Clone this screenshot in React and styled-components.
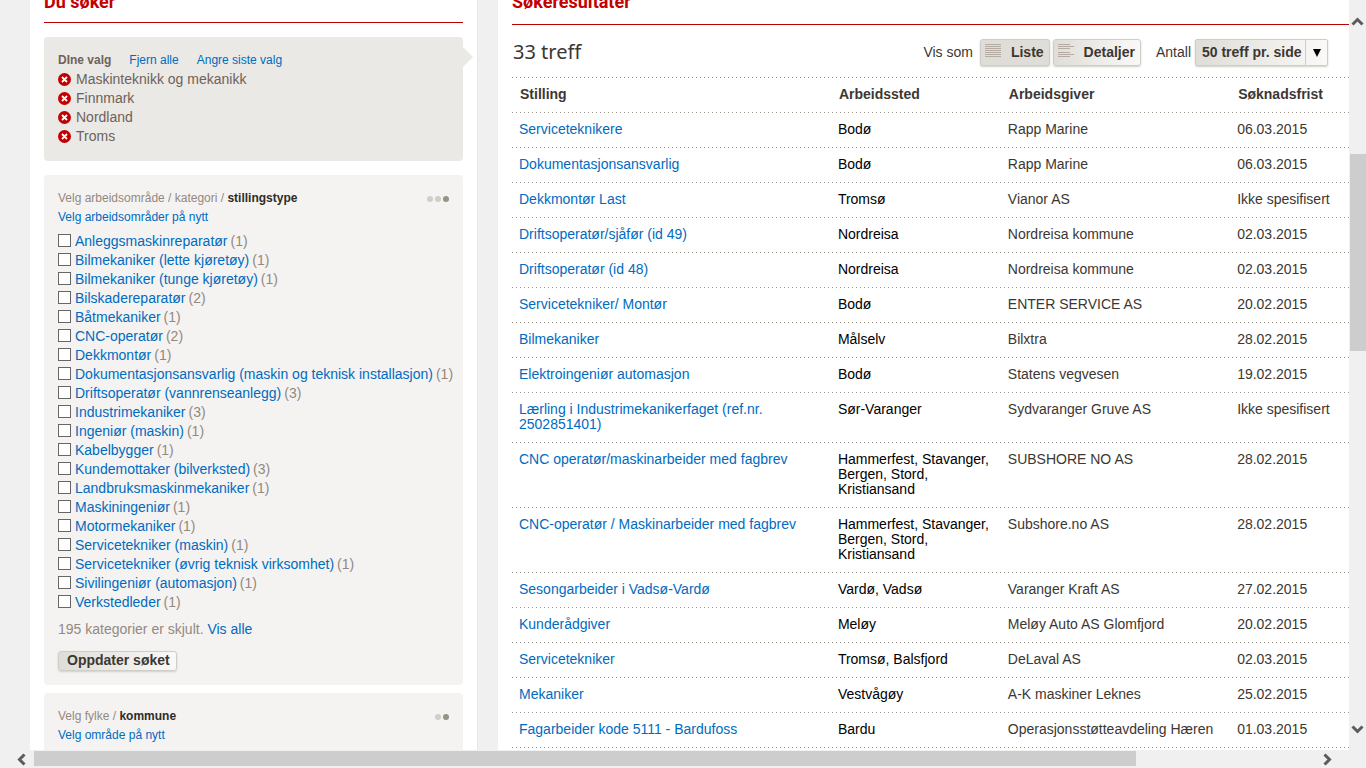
import React from "react";
import styled, { createGlobalStyle } from "styled-components";

const GlobalStyle = createGlobalStyle`
  *, *::before, *::after { box-sizing: border-box; }
  html, body { margin: 0; padding: 0; }
  body {
    background: #f0f0f0;
    color: #3c3732;
    font-family: "Liberation Sans", Arial, Helvetica, sans-serif;
    font-size: 14px;
    line-height: 15px;
  }
`;

const Window = styled.div`
  display: grid;
  grid-template-columns: minmax(0, 1fr) 17px;
  grid-template-rows: minmax(0, 1fr) 18px;
  height: 100vh;
  overflow: hidden;
`;

const Page = styled.div`
  display: grid;
  grid-template-columns: 448px minmax(0, 1fr);
  column-gap: 20px;
  padding-left: 30px;
  overflow: hidden;
`;

const Sidebar = styled.aside`
  padding: 0 14px;
  background: #fff;
  border-right: 1px solid #e8e8e8;
`;

const Results = styled.main`
  padding-left: 14px;
  background: #fff;
`;

const SectionTitle = styled.h2`
  height: ${(p) => p.$height}px;
  margin: -8px 0 0;
  border-bottom: 1px solid #c00000;
  color: #c30000;
  font: bold 18px/20px Roboto, "Liberation Sans", sans-serif;
`;

const Link = styled.a`
  color: #006bbf;
  text-decoration: none;
  &:hover { text-decoration: underline; }
`;

const Panel = styled.section`
  position: relative;
  margin-top: ${(p) => p.$gap}px;
  padding: 14px;
  border-radius: 4px;
  background: ${(p) => (p.$dark ? "#eae9e6" : "#f4f3f2")};
`;

const Pointer = styled.span`
  position: absolute;
  top: 10px;
  left: 100%;
  border: 10px solid transparent;
  border-right-width: 0;
  border-left-color: #eae9e6;
`;

const ChoiceBar = styled.div`
  display: flex;
  gap: 18px;
  color: #6e6259;
  font-size: 12px;
  line-height: 19px;
`;

const PlainList = styled.ul`
  margin: 0;
  padding: ${(p) => (p.$spaced ? "5px 0 0" : "0 0 1px")};
  list-style: none;
`;

const Choice = styled.li`
  display: flex;
  align-items: center;
  gap: 5px;
  height: 19px;
  color: #6e6259;
`;

const RemoveButton = styled.button`
  width: 13px;
  height: 13px;
  padding: 0;
  border: 0;
  background: none;
  svg { display: block; }
`;

const Crumb = styled.header`
  display: flex;
  justify-content: space-between;
  align-items: center;
  color: #93897f;
  font-size: 12px;
  line-height: 19px;
  strong { color: #2f2b27; }
`;

const Dots = styled.span`
  display: flex;
  gap: 2px;
`;

const Dot = styled.i`
  width: 6px;
  height: 6px;
  border-radius: 50%;
  background: ${(p) => (p.$on ? "#999086" : "#d0cec9")};
`;

const Again = styled.div`
  font-size: 12px;
  line-height: 19px;
`;

const Category = styled.li`
  display: flex;
  align-items: center;
  gap: 3px;
  height: 19px;
  color: #93897f;
`;

const CheckLabel = styled.label`
  display: flex;
  align-items: center;
  gap: 4px;
  color: #006bbf;
  white-space: nowrap;
`;

const Check = styled.input`
  appearance: none;
  width: 13px;
  height: 13px;
  margin: 0 0 3px;
  border: 1px solid #666;
  background: #fff;
  &:checked { background: #006bbf; }
`;

const Hidden = styled.p`
  margin: 10px 0 14px;
  color: #93897f;
`;

const Button = styled.button`
  display: flex;
  align-items: center;
  height: ${(p) => (p.$small ? 20 : 27)}px;
  padding: ${(p) => (p.$small ? "0 6px 2px 8px" : "0 5px 1px 4px")};
  gap: 10px;
  border: 1px solid #cfcdc8;
  border-radius: 3px;
  background: ${(p) => (p.$active ? "#deddd7" : "linear-gradient(to right, #deddd7, #faf9f8)")};
  box-shadow: 0 1px 2px #d0cec9;
  color: #3c3732;
  font: bold 14px/15px "Liberation Sans", Arial, sans-serif;
  white-space: nowrap;
`;

const Toolbar = styled.div`
  display: flex;
  align-items: center;
  height: 52px;
  padding: 3px 21px 0 1px;
`;

const HitCount = styled.h3`
  flex: 1;
  margin: 0;
  padding-bottom: 2px;
  font: 20px/24px "Noto Sans", sans-serif;
`;

const ViewGroup = styled.div`
  display: flex;
  align-items: center;
  gap: 3px;
  margin-right: 15px;
  span { margin-right: 4px; }
`;

const CountLabel = styled.label`
  margin-right: 4px;
`;

const SelectWrap = styled.div`
  position: relative;
  display: flex;
`;

const Select = styled.select`
  appearance: none;
  width: 133px;
  height: 27px;
  padding: 0 0 1px 6px;
  border: 1px solid #cfcdc8;
  border-radius: 2px;
  background: linear-gradient(to right, #deddd7, #faf9f8);
  box-shadow: 0 1px 2px #d0cec9;
  color: #3c3732;
  font: bold 14px/15px "Liberation Sans", Arial, sans-serif;
`;

const SelectArrow = styled.span`
  position: absolute;
  top: 1px;
  right: 1px;
  bottom: 1px;
  display: flex;
  align-items: center;
  justify-content: center;
  width: 22px;
  border-left: 1px solid #cfcdc8;
  pointer-events: none;
`;

const dots = "repeating-linear-gradient(to right, #999086 0 1px, transparent 1px 4px)";

const Table = styled.table`
  width: 100%;
  border-collapse: collapse;
  table-layout: fixed;
`;

const Row = styled.tr`
  background: ${dots} left top / 100% 1px no-repeat;
`;

const Head = styled.th`
  width: ${(p) => p.$width};
  padding: 10px 8px;
  text-align: left;
`;

const Cell = styled.td`
  padding: 10px 7px;
  vertical-align: top;
  color: ${(p) => (p.$strong ? "#000" : "#3c3732")};
`;

const Title = styled(Link)`
  display: block;
  max-width: 280px;
`;

const VerticalBar = styled.div`
  display: flex;
  flex-direction: column;
  align-items: center;
  padding: 17px 0 16px;
`;

const HorizontalBar = styled.div`
  display: flex;
  align-items: center;
  grid-column: 1 / -1;
  padding: 0 34px 0 17px;
`;

const Space = styled.div`
  flex: ${(p) => p.$grow} 1 0;
  align-self: stretch;
`;

const Thumb = styled(Space)`
  margin: ${(p) => (p.$horizontal ? "1px 0 2px" : "0 0 0 1px")};
  background: #cdcdcd;
`;

const Chevron = ({ turn, w = 17, h = 9 }) => (
  <svg width={w} height={h} viewBox={`${-w / 2} ${-h / 2} ${w} ${h}`} aria-hidden="true">
    <path d="M-5 3L0 -2L5 3" transform={`rotate(${turn})`} fill="none" stroke="#5c5c5c" strokeWidth="3" />
  </svg>
);

const RemoveIcon = () => (
  <svg width="13" height="13" viewBox="0 0 13 13" aria-hidden="true">
    <circle cx="6.5" cy="6.5" r="6.5" fill="#c30000" />
    <path d="M4 4L9 9M9 4L4 9" stroke="#fff" strokeWidth="1.8" />
  </svg>
);

const LinesIcon = ({ widths }) => (
  <svg width="16" height="16" viewBox="0 0 16 16" shapeRendering="crispEdges" aria-hidden="true">
    {widths.map((w, i) => w > 0 && <rect key={i} y={i * 2} width={w} height="1" fill="#b4aca3" />)}
  </svg>
);

const choices = ["Maskinteknikk og mekanikk", "Finnmark", "Nordland", "Troms"];

const categories = [
  ["Anleggsmaskinreparatør", 1],
  ["Bilmekaniker (lette kjøretøy)", 1],
  ["Bilmekaniker (tunge kjøretøy)", 1],
  ["Bilskadereparatør", 2],
  ["Båtmekaniker", 1],
  ["CNC-operatør", 2],
  ["Dekkmontør", 1],
  ["Dokumentasjonsansvarlig (maskin og teknisk installasjon)", 1],
  ["Driftsoperatør (vannrenseanlegg)", 3],
  ["Industrimekaniker", 3],
  ["Ingeniør (maskin)", 1],
  ["Kabelbygger", 1],
  ["Kundemottaker (bilverksted)", 3],
  ["Landbruksmaskinmekaniker", 1],
  ["Maskiningeniør", 1],
  ["Motormekaniker", 1],
  ["Servicetekniker (maskin)", 1],
  ["Servicetekniker (øvrig teknisk virksomhet)", 1],
  ["Sivilingeniør (automasjon)", 1],
  ["Verkstedleder", 1],
];

const jobs = [
  ["Serviceteknikere", "Bodø", "Rapp Marine", "06.03.2015"],
  ["Dokumentasjonsansvarlig", "Bodø", "Rapp Marine", "06.03.2015"],
  ["Dekkmontør Last", "Tromsø", "Vianor AS", "Ikke spesifisert"],
  ["Driftsoperatør/sjåfør (id 49)", "Nordreisa", "Nordreisa kommune", "02.03.2015"],
  ["Driftsoperatør (id 48)", "Nordreisa", "Nordreisa kommune", "02.03.2015"],
  ["Servicetekniker/ Montør", "Bodø", "ENTER SERVICE AS", "20.02.2015"],
  ["Bilmekaniker", "Målselv", "Bilxtra", "28.02.2015"],
  ["Elektroingeniør automasjon", "Bodø", "Statens vegvesen", "19.02.2015"],
  ["Lærling i Industrimekanikerfaget (ref.nr. 2502851401)", "Sør-Varanger", "Sydvaranger Gruve AS", "Ikke spesifisert"],
  ["CNC operatør/maskinarbeider med fagbrev", "Hammerfest, Stavanger, Bergen, Stord, Kristiansand", "SUBSHORE NO AS", "28.02.2015"],
  ["CNC-operatør / Maskinarbeider med fagbrev", "Hammerfest, Stavanger, Bergen, Stord, Kristiansand", "Subshore.no AS", "28.02.2015"],
  ["Sesongarbeider i Vadsø-Vardø", "Vardø, Vadsø", "Varanger Kraft AS", "27.02.2015"],
  ["Kunderådgiver", "Meløy", "Meløy Auto AS Glomfjord", "20.02.2015"],
  ["Servicetekniker", "Tromsø, Balsfjord", "DeLaval AS", "02.03.2015"],
  ["Mekaniker", "Vestvågøy", "A-K maskiner Leknes", "25.02.2015"],
  ["Fagarbeider kode 5111 - Bardufoss", "Bardu", "Operasjonsstøtteavdeling Hæren", "01.03.2015"],
];

export default function App() {
  return (
    <Window>
      <GlobalStyle />
      <Page>
        <Sidebar>
          <SectionTitle $height={31}>Du søker</SectionTitle>
          <Panel $dark $gap={14}>
            <Pointer />
            <ChoiceBar>
              <strong>DIne valg</strong>
              <Link href="#fjern">Fjern alle</Link>
              <Link href="#angre">Angre siste valg</Link>
            </ChoiceBar>
            <PlainList>
              {choices.map((c) => (
                <Choice key={c}>
                  <RemoveButton type="button" aria-label={`Fjern ${c}`}><RemoveIcon /></RemoveButton>
                  {c}
                </Choice>
              ))}
            </PlainList>
          </Panel>
          <Panel $gap={14}>
            <Crumb>
              <span>Velg arbeidsområde / kategori / <strong>stillingstype</strong></span>
              <Dots><Dot /><Dot /><Dot $on /></Dots>
            </Crumb>
            <Again><Link href="#arbeidsomrade">Velg arbeidsområder på nytt</Link></Again>
            <PlainList $spaced>
              {categories.map(([name, count]) => (
                <Category key={name}>
                  <CheckLabel><Check type="checkbox" />{name}</CheckLabel>
                  ({count})
                </Category>
              ))}
            </PlainList>
            <Hidden>195 kategorier er skjult. <Link href="#alle">Vis alle</Link></Hidden>
            <Button type="button" $small>Oppdater søket</Button>
          </Panel>
          <Panel $gap={8}>
            <Crumb>
              <span>Velg fylke / <strong>kommune</strong></span>
              <Dots><Dot /><Dot $on /></Dots>
            </Crumb>
            <Again><Link href="#omrade">Velg område på nytt</Link></Again>
          </Panel>
        </Sidebar>
        <Results>
          <SectionTitle $height={33}>Søkeresultater</SectionTitle>
          <Toolbar>
            <HitCount>33 treff</HitCount>
            <ViewGroup>
              <span>Vis som</span>
              <Button type="button" $active><LinesIcon widths={[16, 16, 16, 16, 16, 16, 16]} />Liste</Button>
              <Button type="button"><LinesIcon widths={[12, 16, 12, 0, 12, 16, 12]} />Detaljer</Button>
            </ViewGroup>
            <CountLabel htmlFor="antall">Antall</CountLabel>
            <SelectWrap>
              <Select id="antall"><option>50 treff pr. side</option></Select>
              <SelectArrow>
                <svg width="8" height="8" viewBox="0 0 8 8" aria-hidden="true"><path d="M0 0H8L4 8Z" fill="#000" /></svg>
              </SelectArrow>
            </SelectWrap>
          </Toolbar>
          <Table>
            <thead>
              <Row>
                <Head $width="38.1%">Stilling</Head>
                <Head $width="20.3%">Arbeidssted</Head>
                <Head $width="27.4%">Arbeidsgiver</Head>
                <Head $width="14.2%">Søknadsfrist</Head>
              </Row>
            </thead>
            <tbody>
              {jobs.map(([title, place, employer, due]) => (
                <Row key={title}>
                  <Cell><Title href="#stilling">{title}</Title></Cell>
                  <Cell $strong>{place}</Cell>
                  <Cell>{employer}</Cell>
                  <Cell>{due}</Cell>
                </Row>
              ))}
              <Row><Cell colSpan={4} /></Row>
            </tbody>
          </Table>
        </Results>
      </Page>
      <VerticalBar>
        <Chevron turn={0} />
        <Space $grow={128} />
        <Thumb $grow={197} />
        <Space $grow={374} />
        <Chevron turn={180} />
      </VerticalBar>
      <HorizontalBar>
        <Chevron turn={-90} w={9} h={17} />
        <Space $grow={8} />
        <Thumb $horizontal $grow={1102} />
        <Space $grow={187} />
        <Chevron turn={90} w={9} h={17} />
      </HorizontalBar>
    </Window>
  );
}
